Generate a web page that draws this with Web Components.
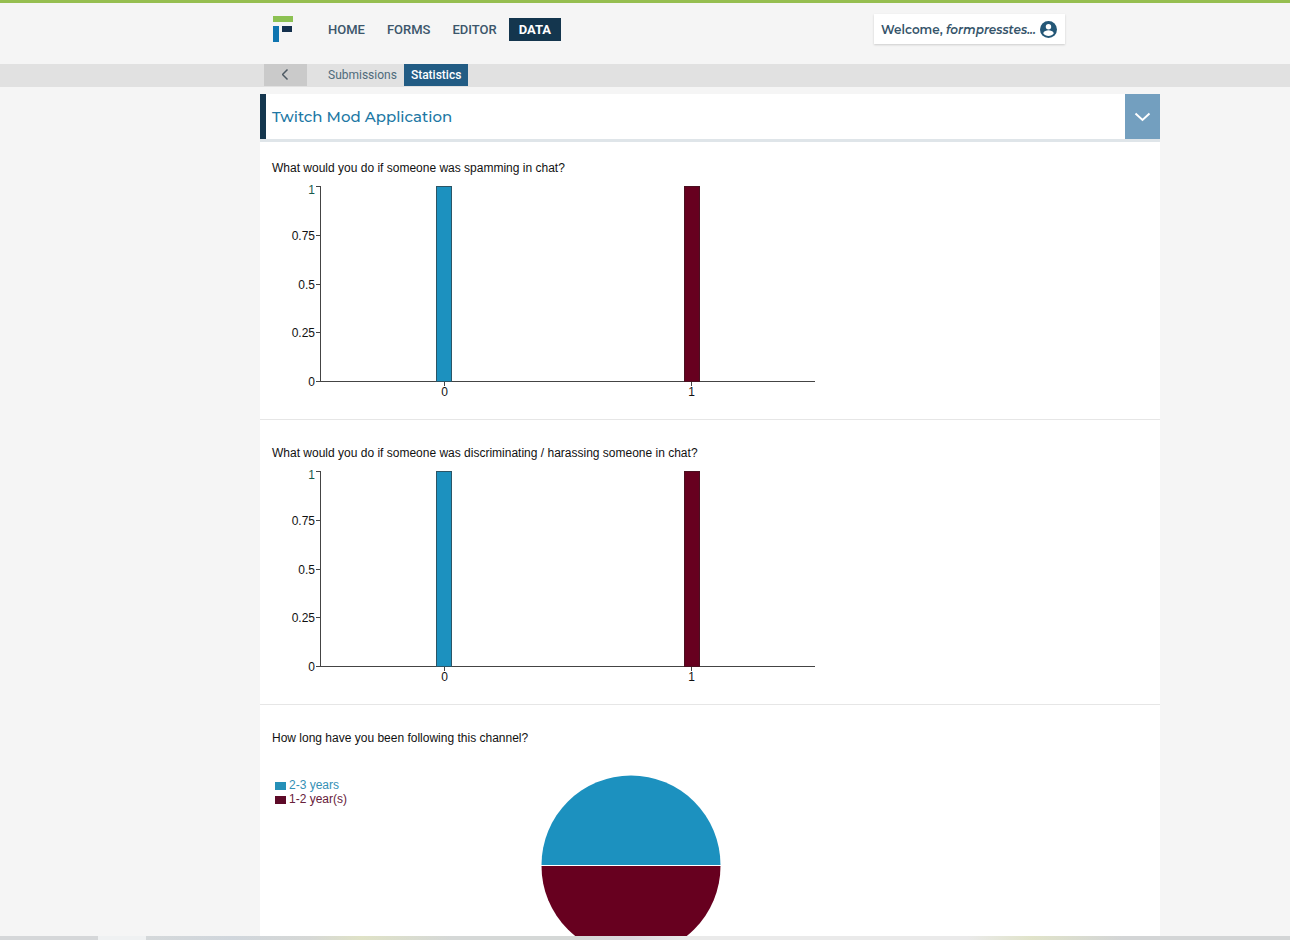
<!DOCTYPE html>
<html lang="en">
<head>
<meta charset="utf-8">
<meta name="viewport" content="width=device-width, initial-scale=1">
<title>Statistics - Twitch Mod Application</title>
<style>
  html, body { margin: 0; height: 100%; }
  body { background: #f5f5f5; color: #111; font: 12px/18px "Liberation Sans", Arial, sans-serif; }
</style>
</head>
<body>
<fp-app>
  <fp-header slot="header" user="formpresstes..."></fp-header>
  <fp-subnav slot="header"></fp-subnav>
  <fp-form-title>Twitch Mod Application</fp-form-title>
  <fp-question label="What would you do if someone was spamming in chat?" first><fp-bar-chart></fp-bar-chart></fp-question>
  <fp-question label="What would you do if someone was discriminating / harassing someone in chat?"><fp-bar-chart></fp-bar-chart></fp-question>
  <fp-question label="How long have you been following this channel?"><fp-pie-chart></fp-pie-chart></fp-question>
</fp-app>
<script>
const define = (name, render) => customElements.define(name, class extends HTMLElement {
  connectedCallback() {
    if (this.shadowRoot) return;
    this.attachShadow({ mode: 'open' }).innerHTML = render(this);
  }
});

define('fp-app', () => `
  <style>
    :host { display: flex; flex-direction: column; height: 100vh; box-sizing: border-box; border-top: 3px solid #96be50; --columns: 2fr minmax(0, 900px) 1fr; }
    main { flex: 1; min-height: 0; overflow-y: auto; scrollbar-width: none; display: grid; grid-template-columns: var(--columns); padding-top: 7px; }
    .page { grid-column: 2; background: #fff; height: max-content; }
    footer { flex: none; height: 4px; background: linear-gradient(90deg, #d5d7d9 0 98px, #eff1f2 98px 146px, #d4d8da 146px, #d0d6dc 18%, #d6d8d6 24%, #dfe2c6 28%, #d5d8d7 35%, #d5d8d7 45%, #ddd7de 49%, #eaeaea 53%, #eaeaea 75%, #e0e3c9 80%, #d3d5d6 87%); }
  </style>
  <slot name="header"></slot>
  <main><div class="page"><slot></slot></div></main>
  <footer></footer>`);

define('fp-header', el => `
  <style>
    :host { display: grid; flex: none; grid-template-columns: var(--columns); height: 61px; color: #3c566b; }
    .row { grid-column: 2; display: flex; align-items: flex-start; padding: 11px 95px 0 12px; }
    .logo { flex: none; display: block; margin-top: 2px; }
    nav { display: flex; gap: 2px; margin: 4px 0 0 24px; font: 500 13px/23px Roboto, sans-serif; }
    a { color: inherit; text-decoration: none; padding: 0 10px; }
    a.active { background: #14364e; color: #fff; font-weight: 700; }
    button { display: flex; align-items: center; justify-content: space-between; gap: 3px; width: 191px; height: 30px; margin-left: auto; padding: 1px 8px 0 7px; border: 0; background: #fff; box-shadow: 0 1px 2px #ccc; color: #35546a; font: 600 12px/18px Montserrat, Inter, sans-serif; white-space: nowrap; }
    svg { display: block; flex: none; }
  </style>
  <div class="row">
    <svg class="logo" width="22" height="27" viewBox="0 0 22 27" aria-hidden="true">
      <path fill="#8cc152" d="M1 0h20v6H1z"/><path fill="#0f75b0" d="M1 10h6v16H1z"/><path fill="#14304d" d="M10 10h10v6H10z"/>
    </svg>
    <nav><a href="#home">HOME</a><a href="#forms">FORMS</a><a href="#editor">EDITOR</a><a class="active" href="#data">DATA</a></nav>
    <button type="button"><span>Welcome, <i>${el.getAttribute('user')}</i></span>
      <svg width="17" height="17" viewBox="0 0 17 17" aria-hidden="true"><circle cx="8.500" cy="8.500" r="8.500" fill="#245777"/><circle cx="8.500" cy="5.700" r="2.700" fill="#fff"/><path fill="#fff" d="M3.200 12.200c.5-2 3.500-2.900 5.300-2.900s4.800.9 5.300 2.900a6.400 6.400 0 0 1-10.600 0z"/></svg>
    </button>
  </div>`);

define('fp-subnav', () => `
  <style>
    :host { display: grid; flex: none; grid-template-columns: var(--columns); height: 23px; background: #e1e1e1; color: #4f6b7b; }
    .row { grid-column: 2; display: flex; align-items: flex-start; padding-left: 4px; font: 12px/22px Roboto, sans-serif; }
    button { display: grid; place-items: center; width: 43px; height: 22px; margin-right: 14px; padding: 0; border: 0; background: #cacaca; }
    a { color: inherit; text-decoration: none; padding: 0 7px; }
    a.active { background: #225c84; color: #fff; font-weight: 500; }
  </style>
  <div class="row">
    <button type="button" aria-label="Back"><svg width="8" height="12" viewBox="0 0 8 12" fill="none" stroke="#4d5963" stroke-width="1.500"><path d="M5.500 .5 .5 5.500l5 5"/></svg></button>
    <a href="#submissions">Submissions</a><a class="active" href="#statistics">Statistics</a>
  </div>`);

define('fp-form-title', () => `
  <style>
    :host { display: flex; height: 45px; border-bottom: 3px solid #dfe5e9; }
    h1 { flex: 1; margin: 0; padding-left: 6px; border-left: 6px solid #14364e; font: 500 15px/45px Montserrat, Inter, sans-serif; color: #2077a4; }
    button { display: grid; place-items: center; width: 35px; padding: 0; border: 0; background: #739fbf; }
  </style>
  <h1><slot></slot></h1>
  <button type="button" aria-label="Choose form"><svg width="17" height="10" viewBox="0 0 17 10" fill="none" stroke="#fff" stroke-width="2"><path d="m1.500 1.500 7 6.500 7-6.500"/></svg></button>`);

define('fp-question', el => `
  <style>
    :host { display: block; padding: 24px 12px 20px; border-bottom: 1px solid #e6e6e6; }
    :host([first]) { padding-top: 17px; }
    h2 { margin: 0; font: inherit; }
  </style>
  <h2>${el.getAttribute('label')}</h2><slot></slot>`);

define('fp-bar-chart', () => {
  const ticks = [1, 0.75, 0.5, 0.25, 0].map((v, i) => {
    const y = Math.round(9 + (1 - v) * 195);
    return `<path class="axis" d="M44 ${y + .5}h5"/><text x="43" y="${i ? y + 5 : y + 8}" text-anchor="end"${i ? '' : ' fill="#175a4c"'}>${v}</text>`;
  }).join('');
  const bars = [[172, '#1c91bf', 0], [419, '#67001f', 1]].map(([x, fill, label]) =>
    `<path class="axis" d="M${x + .5} 204v5"/><rect x="${x - 7.5 + label}" y="9.5" width="15" height="195" fill="${fill}" stroke="${label ? '#4a1020' : '#2b5566'}"/><text x="${x + .5}" y="219" text-anchor="middle">${label}</text>`).join('');
  return `
  <style>
    :host { display: block; }
    svg { display: block; font-size: 12px; fill: #111; }
    .axis { stroke: #444; fill: none; }
  </style>
  <svg width="560" height="222" role="img"><path class="axis" d="M48.5 9.5v195H543"/>${ticks}${bars}</svg>`;
});

define('fp-pie-chart', () => `
  <style>
    :host { display: block; }
    svg { display: block; font-size: 12px; }
  </style>
  <svg width="560" height="222" role="img">
    <rect x="3" y="35" width="11" height="8" fill="#2590b8"/><text x="17" y="42" fill="#3590b5">2-3 years</text>
    <rect x="3" y="49" width="11" height="8" fill="#5d0a28"/><text x="17" y="56" fill="#67203a">1-2 year(s)</text>
    <path d="M269.500 118a89.500 89.500 0 0 1 179 0z" fill="#1c91bf"/>
    <path d="M269.500 119a89.500 89.500 0 0 0 179 0z" fill="#67001f"/>
  </svg>`);
</script>
</body>
</html>
